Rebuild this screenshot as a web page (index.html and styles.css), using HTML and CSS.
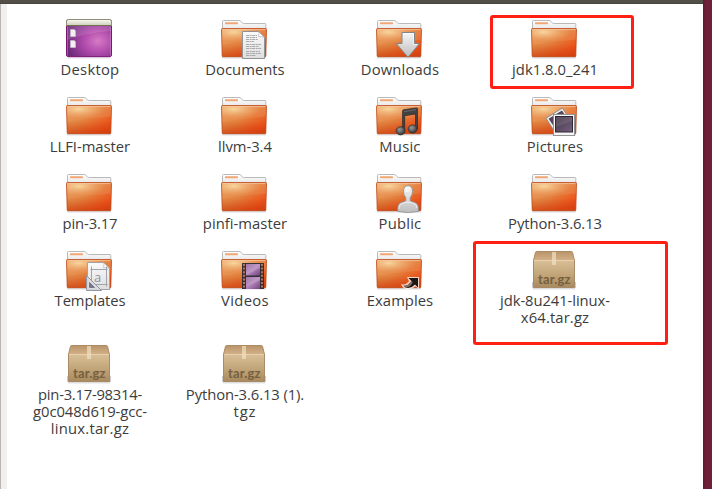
FILE: index.html
```
<!DOCTYPE html>
<html lang="en">
<head>
<meta charset="utf-8">
<title>Home</title>
<link rel="stylesheet" href="styles.css">
</head>
<body>
<svg class="defs" aria-hidden="true">
  <defs>
    <linearGradient id="body" x1="0" y1="0" x2="1" y2="1"><stop offset="0" stop-color="#e8a05c"/><stop offset=".45" stop-color="#e2823f"/><stop offset=".8" stop-color="#ec5219"/><stop offset="1" stop-color="#dd4312"/></linearGradient>
    <radialGradient id="glow" cx=".27" cy=".22" r=".6"><stop offset="0" stop-color="#f6d79e"/><stop offset="1" stop-color="#f2a16b" stop-opacity=".25"/></radialGradient>
    <linearGradient id="low" x1="0" y1="0" x2="0" y2="1"><stop offset=".55" stop-color="#c8410f" stop-opacity="0"/><stop offset="1" stop-color="#c93a0c" stop-opacity=".6"/></linearGradient>
    <linearGradient id="tab" x1="0" y1="0" x2="0" y2="1"><stop offset="0" stop-color="#fff"/><stop offset="1" stop-color="#e2e2e2"/></linearGradient>
    <linearGradient id="silver" x1="0" y1="0" x2="0" y2="1"><stop offset="0" stop-color="#f6f6f6"/><stop offset="1" stop-color="#bdbdbd"/></linearGradient>
    <linearGradient id="paper" x1="0" y1="0" x2="0" y2="1"><stop offset="0" stop-color="#fafafa"/><stop offset="1" stop-color="#dedede"/></linearGradient>
    <radialGradient id="wall" cx=".7" cy=".58" r=".72"><stop offset="0" stop-color="#d67bc4"/><stop offset=".45" stop-color="#b04aac"/><stop offset="1" stop-color="#6b2a78"/></radialGradient>
    <linearGradient id="bar" x1="0" y1="0" x2="0" y2="1"><stop offset="0" stop-color="#fafaf2"/><stop offset="1" stop-color="#d2d2c0"/></linearGradient>
    <linearGradient id="box" x1="0" y1="0" x2="0" y2="1"><stop offset="0" stop-color="#d9bf97"/><stop offset=".5" stop-color="#c3a67a"/><stop offset="1" stop-color="#a98a5f"/></linearGradient>
    <linearGradient id="lid" x1="0" y1="0" x2="0" y2="1"><stop offset="0" stop-color="#b9946a"/><stop offset="1" stop-color="#d3b188"/></linearGradient>
    <linearGradient id="photo" x1="0" y1="0" x2="1" y2="1"><stop offset="0" stop-color="#433548"/><stop offset="1" stop-color="#75627c"/></linearGradient>
    <linearGradient id="frame" x1="0" y1="0" x2="1" y2="1"><stop offset="0" stop-color="#8c5799"/><stop offset=".5" stop-color="#b182ba"/><stop offset="1" stop-color="#70417e"/></linearGradient>
    <radialGradient id="note" cx=".4" cy=".35" r=".6"><stop offset="0" stop-color="#9a9a9a"/><stop offset="1" stop-color="#3c3c3c"/></radialGradient>
  </defs>

  <symbol id="folder" viewBox="0 0 48 48">
    <path d="M2 42.8h44" stroke="#000" stroke-opacity=".13" stroke-width="1.6"/>
    <path d="M2.5 16V6.5q0-1 1-1H19q1 0 1.8.8l1.6 1.5q.7.7 1.8.7H45q.8 0 .8.8V16z" fill="url(#tab)" stroke="#b9b9b9"/>
    <rect x="5" y="7.2" width="13" height="2" rx=".6" fill="#f0a675"/>
    <path d="M1.5 14.5q0-1 1-1h43q1 0 1 1L45.8 41q0 .7-.8.7H3q-.8 0-.8-.7z" fill="url(#body)"/>
    <path d="M1.5 14.5q0-1 1-1h43q1 0 1 1L45.8 41q0 .7-.8.7H3q-.8 0-.8-.7z" fill="url(#low)"/>
    <path d="M1.5 13.5h45L46 24.5Q28 26 2 29.5z" fill="url(#glow)"/>
    <path d="M2.8 14.6h42.6" stroke="#f8c9a0" stroke-opacity=".75" fill="none"/>
    <path d="M1.5 14.5q0-1 1-1h43q1 0 1 1L45.8 41q0 .7-.8.7H3q-.8 0-.8-.7z" fill="none" stroke="#bd4a1c" stroke-opacity=".8"/>
  </symbol>

  <symbol id="desktop" viewBox="0 0 48 48">
    <path d="M3 42.8h42" stroke="#7b2a80" stroke-opacity=".25"/>
    <rect x="1.5" y="4.5" width="45" height="37" rx="1.7" fill="url(#wall)"/>
    <path d="M2 11h44v5Q20 18 2 25z" fill="#fff" fill-opacity=".12"/>
    <path d="M2 10V6q0-1.5 1.5-1.5h41Q46 4.500 46 6v4z" fill="url(#bar)"/>
    <path d="M2 10.500h44" stroke="#737052"/>
    <path d="M1.500 11V6.200q0-1.700 1.700-1.700h41.600q1.700 0 1.700 1.700V11" fill="none" stroke="#918e7c"/>
    <path d="M1.500 11v29q0 1.600 1.600 1.600h41.800q1.600 0 1.600-1.600V11" fill="none" stroke="#79166f"/>
    <path d="M2.500 12v28.500M45.500 12v28.500" stroke="#dca0d5" stroke-opacity=".4"/>
    <path d="M5.500 14.500h3.700l1.300 1.300v5.700h-5zM5.500 25.500h3.700l1.300 1.300v5.700h-5z" fill="#f3f0f3" stroke="#c5b5c8" stroke-width=".8"/>
  </symbol>

  <symbol id="doc" viewBox="0 0 48 48">
    <path d="M22.500 16.500h16l6 5.500v21.500h-22z" fill="url(#paper)" stroke="#929292"/>
    <path d="M38.500 16.500q1 2.500 0 5.200 3.200-.7 6 .8z" fill="#fff" stroke="#aaa" stroke-width=".6"/>
    <path d="M26 20.500h11M26 22.500h11M26 24.500h12M26 26.500h8M26 29.500h15M26 31.500h13M26 33.500h15M26 36.500h14M26 38.500h15M26 40.500h10" stroke="#999" stroke-width=".8" stroke-dasharray="3 .6 2 .5"/>
  </symbol>

  <symbol id="down" viewBox="0 0 48 48">
    <path d="M27 17.500h12.500v11h5L33 42.300 21.300 28.500H27z" fill="url(#silver)" stroke="#858585"/>
    <path d="M28 18.500h10.500v11h4" fill="none" stroke="#fff" stroke-opacity=".7" stroke-width=".7"/>
  </symbol>

  <symbol id="music" viewBox="0 0 48 48">
    <path d="M27.600 19q0-1 1-1.200l12.800-1.900q1.100-.1 1.100 1V37h-2V22l-10.800 1.700V38.500h-2.100z" fill="#424242" stroke="#292929" stroke-width=".7"/>
    <path d="M29 19.600l12-1.900" stroke="#747474" stroke-width=".8"/>
    <ellipse cx="25.600" cy="38.800" rx="4.500" ry="4.100" fill="url(#note)" stroke="#2e2e2e" stroke-width=".7"/>
    <ellipse cx="37.600" cy="37" rx="4.500" ry="4.100" fill="url(#note)" stroke="#2e2e2e" stroke-width=".7"/>
  </symbol>

  <symbol id="pics" viewBox="0 0 48 48">
    <path d="M16 26.200L32.400 16l7.800 12-16 11z" fill="#efefef" stroke="#858585" stroke-width=".9"/>
    <path d="M18.600 26.800L32 18.500l7 10.500-13.500 8z" fill="url(#photo)"/>
    <rect x="23.500" y="22.500" width="21" height="21" fill="#f5f5f5" stroke="#929292"/>
    <rect x="25.500" y="24.500" width="17" height="15.500" fill="url(#photo)" stroke="#302638"/>
    <path d="M26 25h16v4L26 35z" fill="#fff" fill-opacity=".1"/>
  </symbol>

  <symbol id="person" viewBox="0 0 48 48">
    <path d="M22.800 42.500v-3.700q0-4.300 4.200-5.600l3-.9q1-.4.900-1.600l-.2-2.200q-2.200-2.300-2.200-6 0-5.800 4.500-5.800t4.500 5.800q0 3.700-2.200 6l-.2 2.200q-.1 1.200.9 1.600l3 .9q4.300 1.300 4.300 5.600v3.700q-10 2.200-20.500 0z" fill="url(#silver)" stroke="#949494" stroke-width=".9"/>
    <path d="M24 40v-1q0-3.500 3.500-4.600l4-1.300q1.500 1.500 3 0l4 1.300q3.500 1.200 3.500 4.600" fill="none" stroke="#fff" stroke-opacity=".8" stroke-width=".8"/>
    <ellipse cx="32" cy="20.500" rx="2.300" ry="2.800" fill="#fff" fill-opacity=".55"/>
  </symbol>

  <symbol id="template" viewBox="0 0 48 48">
    <path d="M22.500 16.500h16l6 5.500v21.500h-22z" fill="url(#paper)" stroke="#a2a2a8"/>
    <path d="M38.500 16.500q1 2.500 0 5.200 3.200-.7 6 .8z" fill="#fff" stroke="#aaa" stroke-width=".6"/>
    <path d="M25.500 23.500h17M26.500 20.500v20M41.500 20.500v20M25.500 38.500h17" stroke="#9a9aa5" stroke-width=".9"/>
    <text x="29" y="35.500" class="letter">a</text>
    <path d="M21.500 29.500V44.500H36.500z" fill="#d8d8e0" fill-opacity=".9" stroke="#9595a0"/>
    <path d="M24.500 36.500v5h5z" fill="#777783" stroke="#666673" stroke-width=".7"/>
  </symbol>

  <symbol id="film" viewBox="0 0 48 48">
    <rect x="22" y="17" width="22" height="26" rx=".6" fill="#343036"/>
    <path d="M24 18v24.500M42 18v24.500" stroke="#bd7350" stroke-width="2" stroke-dasharray="2 1.600"/>
    <rect x="26" y="18" width="14" height="11.500" fill="url(#frame)"/>
    <rect x="26" y="31" width="14" height="12" fill="url(#frame)"/>
    <path d="M26 18h14v4l-14 7zM26 31h14v3l-14 7z" fill="#fff" fill-opacity=".18"/>
  </symbol>

  <symbol id="link" viewBox="0 0 48 48">
    <path d="M32 31h12v12l-3.500-2.500q-4 3-9 2.500-4-.5-5.500-5 4 2 8-2.800z" fill="#fff" fill-opacity=".75"/>
    <path d="M33.500 32h9.500v9.500l-3-3q-3.500 3.800-7.500 3.500-3-.2-4-2.300 4.500.8 8-4.700z" fill="#1b1714"/>
    <path d="M28.500 39.700q4.500.8 8-4.700l1.300 1.200q-3 5.500-7.500 5.300z" fill="#8a7063"/>
  </symbol>

  <symbol id="package" viewBox="0 0 48 48">
    <path d="M2.500 36v6M45.500 36v6M3 42.800h42" stroke="#000" stroke-opacity=".2"/>
    <path d="M6.500 5.500h35q.8 0 1 .8l2 8.200h-41l2-8.200q.2-.8 1-.8z" fill="url(#lid)" stroke="#af8b63"/>
    <path d="M3.500 14.500h41V41.500h-41z" fill="url(#box)" stroke="#a1835c" stroke-width=".9"/>
    <path d="M4 14.500h40" stroke="#e8d0ac"/>
    <path d="M22 6h4v13h-4z" fill="#f0dfc5" fill-opacity=".7"/>
    <text x="8" y="38.400" class="stamp" textLength="32.500">tar.gz</text>
  </symbol>
</svg>

<div class="window">
  <header class="toolbar-edge"></header>
  <div class="content">
    <div class="sidebar-edge"></div>
    <main class="files">
      <figure class="item"><svg class="icon"><use href="#desktop"/></svg><figcaption><span data-w="57">Desktop</span></figcaption></figure>
      <figure class="item"><svg class="icon"><use href="#folder"/><use href="#doc"/></svg><figcaption><span data-w="77.5">Documents</span></figcaption></figure>
      <figure class="item"><svg class="icon"><use href="#folder"/><use href="#down"/></svg><figcaption><span data-w="76.5">Downloads</span></figcaption></figure>
      <figure class="item"><svg class="icon"><use href="#folder"/></svg><figcaption><span data-w="84">jdk1.8.0_241</span></figcaption><i class="mark mark-folder"></i></figure>

      <figure class="item"><svg class="icon"><use href="#folder"/></svg><figcaption><span data-w="78.5">LLFI-master</span></figcaption></figure>
      <figure class="item"><svg class="icon"><use href="#folder"/></svg><figcaption><span data-w="52">llvm-3.4</span></figcaption></figure>
      <figure class="item"><svg class="icon"><use href="#folder"/><use href="#music"/></svg><figcaption><span data-w="39.5">Music</span></figcaption></figure>
      <figure class="item"><svg class="icon"><use href="#folder"/><use href="#pics"/></svg><figcaption><span data-w="54.5">Pictures</span></figcaption></figure>

      <figure class="item"><svg class="icon"><use href="#folder"/></svg><figcaption><span data-w="53">pin-3.17</span></figcaption></figure>
      <figure class="item"><svg class="icon"><use href="#folder"/></svg><figcaption><span data-w="82.5">pinfi-master</span></figcaption></figure>
      <figure class="item"><svg class="icon"><use href="#folder"/><use href="#person"/></svg><figcaption><span data-w="41">Public</span></figcaption></figure>
      <figure class="item"><svg class="icon"><use href="#folder"/></svg><figcaption><span data-w="92">Python-3.6.13</span></figcaption></figure>

      <figure class="item"><svg class="icon"><use href="#folder"/><use href="#template"/></svg><figcaption><span data-w="69">Templates</span></figcaption></figure>
      <figure class="item"><svg class="icon"><use href="#folder"/><use href="#film"/></svg><figcaption><span data-w="46">Videos</span></figcaption></figure>
      <figure class="item"><svg class="icon"><use href="#folder"/><use href="#link"/></svg><figcaption><span data-w="64.5">Examples</span></figcaption></figure>
      <figure class="item"><svg class="icon"><use href="#package"/></svg><figcaption><span data-w="108">jdk-8u241-linux-</span><span data-w="66.5">x64.tar.gz</span></figcaption><i class="mark mark-archive"></i></figure>

      <figure class="item"><svg class="icon"><use href="#package"/></svg><figcaption><span data-w="102">pin-3.17-98314-</span><span data-w="112">g0c048d619-gcc-</span><span data-w="76.5">linux.tar.gz</span></figcaption></figure>
      <figure class="item"><svg class="icon"><use href="#package"/></svg><figcaption><span data-w="116.5">Python-3.6.13 (1).</span><span data-w="21">tgz</span></figcaption></figure>
    </main>
  </div>
</div>
<div class="wallpaper"></div>
<script src="labels.js"></script>
</body>
</html>
```
FILE: styles.css
```
* {
  box-sizing: border-box;
}

body {
  margin: 0;
  height: 489px;
  display: flex;
  overflow: hidden;
  background: #fff;
  font-family: "Open Sans", "Noto Sans", sans-serif;
}

.defs {
  position: absolute;
  width: 0;
  height: 0;
}

.window {
  width: 703px;
  display: flex;
  flex-direction: column;
}

.toolbar-edge {
  height: 4px;
  background: #514f47;
  border-bottom: 1px solid #47453d;
}

.content {
  flex: 1;
  display: flex;
}

.sidebar-edge {
  width: 7px;
  background: #f2f0ef;
  border-left: 1px solid #b9b5b0;
}

.wallpaper {
  flex: 1;
  background: linear-gradient(90deg, #5a1b32, #702139 3px, #6d2038);
}

.files {
  display: grid;
  grid-template-columns: repeat(4, 154px);
  grid-template-rows: 77px 77px 77px 94px auto;
  column-gap: 1px;
  align-content: start;
  padding: 11px 0 0 5px;
}

.item {
  position: relative;
  margin: 0;
  display: flex;
  flex-direction: column;
  align-items: center;
}

.icon {
  width: 48px;
  height: 48px;
  flex: none;
}

figcaption {
  display: flex;
  flex-direction: column;
  align-items: center;
  margin-top: -2px;
  padding-left: 2px;
  color: #3c3c3c;
  font-size: 14.8px;
  font-weight: 450;
  line-height: 17px;
  white-space: nowrap;
}

.mark {
  position: absolute;
  border: 3px solid #ff2013;
  border-radius: 3px;
}

.mark-folder {
  left: 13px;
  top: 0;
  width: 144px;
  height: 74px;
}

.mark-archive {
  left: -4px;
  top: -5px;
  width: 195px;
  height: 104px;
}

.stamp {
  font: 700 13px Lato, sans-serif;
  fill: #75603f;
}

.letter {
  font: 13px "Open Sans", sans-serif;
  fill: #9090a0;
}
```
FILE: labels.js
```
// Fit every label line to its measured width.
document.querySelectorAll('[data-w]').forEach(function (line) {
  var natural = line.getBoundingClientRect().width;
  var target = Number(line.dataset.w) + 1.8;
  line.style.letterSpacing = (target - natural) / line.textContent.length + 'px';
});
```
